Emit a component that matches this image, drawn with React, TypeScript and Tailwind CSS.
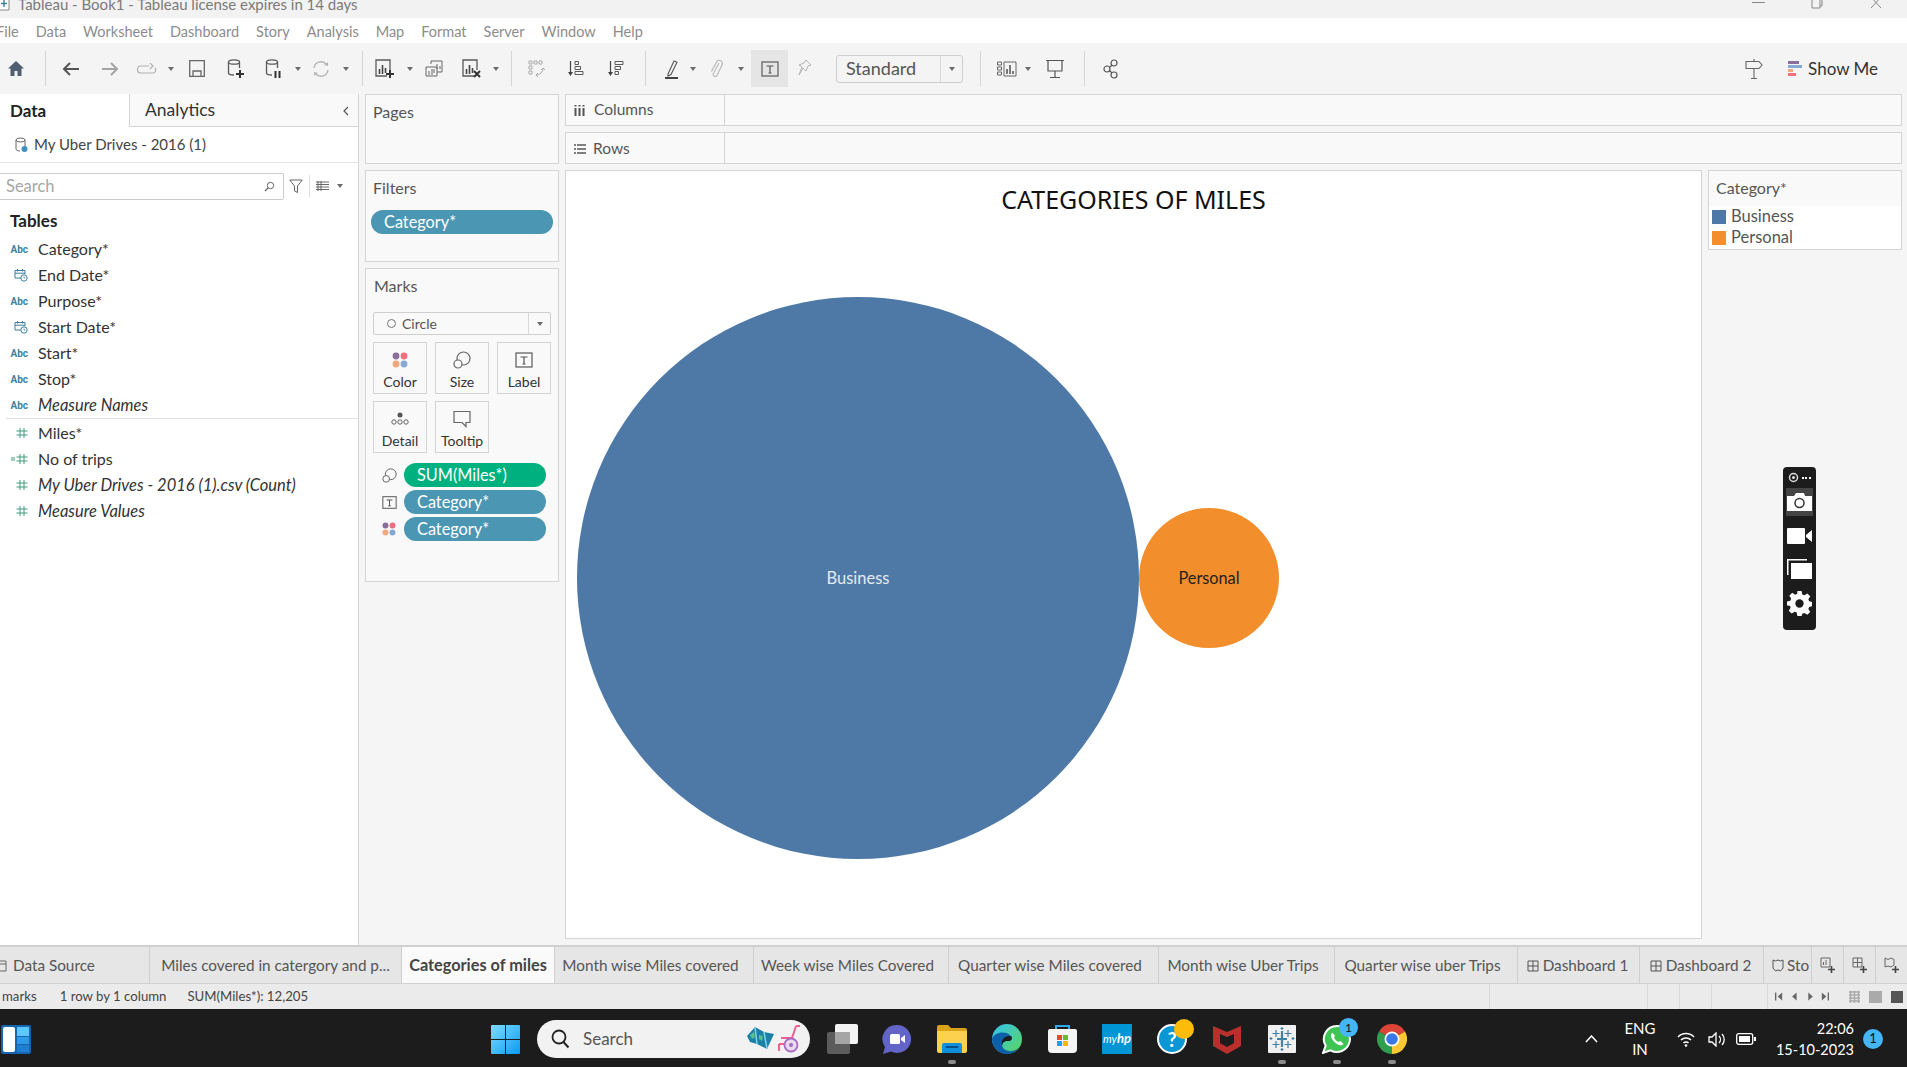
import type { ReactNode } from "react";

const S = { fill: "none", stroke: "#5a5a5a", strokeWidth: 1.3 };

function Caret({ className = "" }: { className?: string }) {
  return (
    <svg width="6" height="4" viewBox="0 0 6 4" className={className}>
      <path d="M0 0h6L3 4z" fill="#6b6b6b" />
    </svg>
  );
}

function Sep({ className = "" }: { className?: string }) {
  return <div className={`w-px h-[35px] bg-[#d6d6d6] ${className}`} />;
}

function HomeIcon({ className = "" }: { className?: string }) {
  return (
    <svg width="18" height="17" viewBox="0 0 18 17" className={className}>
      <path d="M9 1L1 8.5h2.5V16h4v-5h3v5h4V8.5H17z" fill="#4f5f70" />
    </svg>
  );
}

function ArrowIcon({ dir, color, className = "" }: { dir: "l" | "r"; color: string; className?: string }) {
  return (
    <svg width="18" height="14" viewBox="0 0 18 14" className={className}>
      <path
        d={dir === "l" ? "M17 7H2M8 1L2 7l6 6" : "M1 7h15M10 1l6 6-6 6"}
        fill="none"
        stroke={color}
        strokeWidth="2"
      />
    </svg>
  );
}

function Cylinder({ badge, className = "" }: { badge: "plus" | "pause"; className?: string }) {
  return (
    <svg width="18" height="20" viewBox="0 0 18 20" className={className}>
      <ellipse cx="7" cy="3" rx="5.5" ry="2.2" {...S} />
      <path d="M1.5 3v11c0 1.2 2 2 5.5 2M12.5 3v6" {...S} />
      {badge === "plus" ? (
        <path d="M13 11v8M9 15h8" stroke="#333" strokeWidth="2" />
      ) : (
        <path d="M10.5 12v7M14.5 12v7" stroke="#333" strokeWidth="2" />
      )}
    </svg>
  );
}

function SheetIcon({ mark, className = "" }: { mark: "plus" | "x"; className?: string }) {
  return (
    <svg width="20" height="20" viewBox="0 0 20 20" className={className}>
      <path d="M12 17H1V1h14v10" {...S} />
      <path d="M4.5 10v5M7.5 6v9M10.5 9v5" stroke="#444" strokeWidth="1.6" />
      {mark === "plus" ? (
        <path d="M15 11v8M11 15h8" stroke="#333" strokeWidth="2" />
      ) : (
        <path d="M12 12l6 6M18 12l-6 6" stroke="#333" strokeWidth="2" />
      )}
    </svg>
  );
}

function SortIcon({ desc, className = "" }: { desc?: boolean; className?: string }) {
  return (
    <svg width="16" height="17" viewBox="0 0 16 17" className={className}>
      <path d="M2.5 1v13" stroke="#444" strokeWidth="1.2" />
      <path d="M0 12h5l-2.5 4z" fill="#444" />
      {desc ? (
        <path d="M7 1.5h8v3H7zM7 6.5h5.5v3H7zM7 11.5h3.5v3H7z" {...S} strokeWidth="1" />
      ) : (
        <path d="M7 1.5h3.5v3H7zM7 6.5h5.5v3H7zM7 11.5h8v3H7z" {...S} strokeWidth="1" />
      )}
    </svg>
  );
}

function LabelBox({ size = 18, className = "" }: { size?: number; className?: string }) {
  return (
    <svg width={size} height={size} viewBox="0 0 18 18" className={className}>
      <rect x="1" y="2" width="16" height="14" fill="none" stroke="#666" strokeWidth="1.3" />
      <path d="M5.5 6h7M9 6v7M7.5 13h3" stroke="#555" strokeWidth="1.2" fill="none" />
    </svg>
  );
}

function SizeIcon({ size = 18, className = "" }: { size?: number; className?: string }) {
  return (
    <svg width={size} height={size} viewBox="0 0 18 18" className={className}>
      <circle cx="10.5" cy="7.5" r="6.5" fill="none" stroke="#666" strokeWidth="1.2" />
      <circle cx="5" cy="13" r="4" fill="#fafafa" stroke="#666" strokeWidth="1.2" />
    </svg>
  );
}

function ColorDots({ size = 16, className = "" }: { size?: number; className?: string }) {
  return (
    <svg width={size} height={size} viewBox="0 0 16 16" className={className}>
      <circle cx="4" cy="4" r="3.4" fill="#8a6d9b" />
      <circle cx="12" cy="4" r="3.4" fill="#f26d7d" />
      <circle cx="4" cy="12" r="3.4" fill="#f3a77e" />
      <circle cx="12" cy="12" r="3.4" fill="#86a9d4" />
    </svg>
  );
}

function DateIcon() {
  return (
    <svg width="14" height="14" viewBox="0 0 14 14">
      <path d="M8 10H1V2.5h10V6M1 5.2h10M3.5 1v2.5M8.5 1v2.5" fill="none" stroke="#3f7f9c" strokeWidth="1" />
      <circle cx="10" cy="10" r="3.2" fill="#fff" stroke="#3f7f9c" strokeWidth="1" />
      <path d="M10 8.5V10h1.4" fill="none" stroke="#3f7f9c" strokeWidth="0.8" />
    </svg>
  );
}

function HashIcon({ calc }: { calc?: boolean }) {
  return (
    <svg width="18" height="12" viewBox="0 0 18 12">
      <path d="M10 1v10M14 1v10M6.5 4h11M6.5 8h11" stroke="#3e9d7e" strokeWidth="1" fill="none" />
      {calc && <path d="M1 5h4M1 7h4" stroke="#3e9d7e" strokeWidth="1" />}
    </svg>
  );
}

type Field = { name: string; kind: "abc" | "date" | "num" | "calc"; italic?: boolean };

const dims: Field[] = [
  { name: "Category*", kind: "abc" },
  { name: "End Date*", kind: "date" },
  { name: "Purpose*", kind: "abc" },
  { name: "Start Date*", kind: "date" },
  { name: "Start*", kind: "abc" },
  { name: "Stop*", kind: "abc" },
  { name: "Measure Names", kind: "abc", italic: true },
];

const measures: Field[] = [
  { name: "Miles*", kind: "num" },
  { name: "No of trips", kind: "calc" },
  { name: "My Uber Drives - 2016 (1).csv (Count)", kind: "num", italic: true },
  { name: "Measure Values", kind: "num", italic: true },
];

function FieldRow({ f }: { f: Field }) {
  return (
    <div className="flex items-center h-[26px]">
      <div className="w-[38px] flex justify-end pr-[10px]">
        {f.kind === "abc" && <span className="text-[10px] font-bold text-[#3f7f9c] font-['Roboto',sans-serif]">Abc</span>}
        {f.kind === "date" && <DateIcon />}
        {f.kind === "num" && <HashIcon />}
        {f.kind === "calc" && <HashIcon calc />}
      </div>
      <span className={f.italic ? "text-[16.5px] italic text-[#333]" : "text-[16px] text-[#333]"}>{f.name}</span>
    </div>
  );
}

function MarkButton({ label, icon }: { label: string; icon: ReactNode }) {
  return (
    <div className="h-[52px] border border-[#d4d4d4] flex flex-col items-center pt-[7px]">
      <div className="h-[20px] flex items-center">{icon}</div>
      <span className="text-[14px] leading-[18px] mt-[3px] text-[#333]">{label}</span>
    </div>
  );
}

function Pill({ children, className }: { children: ReactNode; className: string }) {
  return (
    <div className={`h-[24px] rounded-full flex items-center text-[16.3px] text-white ${className}`}>{children}</div>
  );
}

const tabs = [
  { label: "Miles covered in catergory and p...", cls: "w-[252px] justify-center" },
  { label: "Categories of miles", cls: "w-[153px] justify-center font-bold text-[16.3px] bg-[#fafafa] text-[#444]" },
  { label: "Month wise Miles covered", cls: "w-[199px] justify-center pr-[7px]" },
  { label: "Week wise Miles Covered", cls: "w-[195px] justify-center pr-[7px]" },
  { label: "Quarter wise Miles covered", cls: "w-[210px] justify-center pr-[7px]" },
  { label: "Month wise Uber Trips", cls: "w-[176px] justify-center pr-[7px]" },
  { label: "Quarter wise uber Trips", cls: "w-[183px] justify-center pr-[7px]" },
];

function TabGrid() {
  return (
    <svg width="12" height="12" viewBox="0 0 12 12" className="mr-[4px] shrink-0">
      <path d="M1 1h10v10H1zM6 1v10M1 6h10" fill="none" stroke="#555" strokeWidth="1" />
    </svg>
  );
}

function NewTabIcon({ kind }: { kind: "sheet" | "dash" | "story" }) {
  return (
    <svg width="16" height="17" viewBox="0 0 16 17">
      {kind === "sheet" && <path d="M1 1h9v9H1zM3.5 8V5M6 8V3" fill="none" stroke="#666" strokeWidth="1" />}
      {kind === "dash" && <path d="M1 1h9v9H1zM5.5 1v9M1 5.5h9" fill="none" stroke="#666" strokeWidth="1" />}
      {kind === "story" && <path d="M1 1l3 1.5L7 1l3 1.5V8l-3 2-3-1-3 1z" fill="none" stroke="#666" strokeWidth="1" />}
      <path d="M11.5 9v7M8 12.5h7" stroke="#444" strokeWidth="1.6" />
    </svg>
  );
}

function Running({ children, dot }: { children: ReactNode; dot?: boolean }) {
  return (
    <div className="relative w-[30px] h-[30px] flex items-center justify-center">
      {children}
      {dot && <div className="absolute left-[11px] top-[36px] w-[8px] h-[4px] rounded-full bg-[#8b8b8b]" />}
    </div>
  );
}

export default function App() {
  return (
    <div className="relative w-[1907px] h-[1067px] overflow-hidden flex flex-col bg-[#f5f5f5] font-['Lato',sans-serif] text-[#333]">
      {/* Title bar */}
      <div className="h-[18px] shrink-0 bg-[#f2f2f2] flex items-start overflow-hidden text-[#7a7a7a]">
        <svg width="12" height="14" viewBox="0 0 12 14" className="ml-[-2px] mt-[-3px]">
          <path d="M1 1h10v12H1z" fill="#fff" stroke="#888" />
          <path d="M6 3v7M3 6.5h6" stroke="#3f7f9c" strokeWidth="1.4" />
        </svg>
        <span className="ml-[8px] mt-[-6px] text-[15px] leading-[20px]">
          Tableau - Book1 - Tableau license expires in 14 days
        </span>
        <div className="ml-auto flex items-start text-[#777]">
          <div className="w-[13px] h-px bg-[#888] mt-[2px]" />
          <svg width="12" height="9" viewBox="0 0 12 9" className="ml-[46px]">
            <path d="M1 0v8h8V0M3 0V-2h8v8H9" fill="none" stroke="#888" />
          </svg>
          <svg width="12" height="9" viewBox="0 0 12 9" className="ml-[47px] mr-[25px]">
            <path d="M1 -3l10 11M11 -3L1 8" fill="none" stroke="#888" />
          </svg>
        </div>
      </div>

      {/* Menu */}
      <div className="h-[25px] shrink-0 bg-white flex items-center gap-[17px] pt-[2px] text-[14.5px] text-[#8c8c8c] overflow-hidden">
        <span className="ml-[-4px]">File</span>
        <span>Data</span>
        <span>Worksheet</span>
        <span>Dashboard</span>
        <span>Story</span>
        <span>Analysis</span>
        <span>Map</span>
        <span>Format</span>
        <span>Server</span>
        <span>Window</span>
        <span>Help</span>
      </div>

      {/* Toolbar */}
      <div className="h-[51px] shrink-0 flex items-center pl-[7px] pr-[29px] bg-[#f4f4f4]">
        <HomeIcon />
        <Sep className="ml-[20px]" />
        <ArrowIcon dir="l" color="#555" className="ml-[16px]" />
        <ArrowIcon dir="r" color="#a3a3a3" className="ml-[21px]" />
        <svg width="20" height="12" viewBox="0 0 20 12" className="ml-[18px]">
          <path d="M12 3H4a3 3 0 0 0 0 7h12a3 3 0 0 0 2-5M13 0l3 3-3 3" fill="none" stroke="#b0b0b0" strokeWidth="1.2" />
        </svg>
        <Caret className="ml-[11px]" />
        <svg width="16" height="17" viewBox="0 0 16 17" className="ml-[15px]">
          <path d="M.7.7h14.6v15.6H.7zM4 16v-5h8v5" fill="none" stroke="#666" strokeWidth="1.3" />
        </svg>
        <Cylinder badge="plus" className="ml-[22px]" />
        <Cylinder badge="pause" className="ml-[20px]" />
        <Caret className="ml-[12px]" />
        <svg width="18" height="18" viewBox="0 0 18 18" className="ml-[11px]">
          <path d="M2 8a7 7 0 0 1 12-4M16 10a7 7 0 0 1-12 4" fill="none" stroke="#b5b5b5" strokeWidth="1.4" />
          <path d="M12 5l4 1V2zM6 13l-4-1v4z" fill="#b5b5b5" />
        </svg>
        <Caret className="ml-[13px]" />
        <Sep className="ml-[13px]" />
        <SheetIcon mark="plus" className="ml-[12px]" />
        <Caret className="ml-[12px]" />
        <svg width="18" height="18" viewBox="0 0 18 18" className="ml-[12px]">
          <path d="M6 4V1h11v11h-5M1 7h11v9H1z" fill="#f4f4f4" stroke="#666" strokeWidth="1" />
          <path d="M9 9v4M12 4v5M15 6v3M4 11v4M7 9v6" stroke="#666" strokeWidth="1" />
        </svg>
        <SheetIcon mark="x" className="ml-[19px]" />
        <Caret className="ml-[11px]" />
        <Sep className="ml-[12px]" />
        <svg width="18" height="18" viewBox="0 0 18 18" className="ml-[16px]">
          <path d="M1 1h3v3H1zM6 1h3v3H6zM11 1h3v3h-3zM1 6h3v3H1zM1 11h3v3H1z" fill="none" stroke="#aaa" />
          <path d="M15 8c0 4-3 7-7 7m0 0l2-2m-2 2l2 2m5-9l-2 2m2-2l2 2" fill="none" stroke="#aaa" />
        </svg>
        <SortIcon className="ml-[22px]" />
        <SortIcon desc className="ml-[24px]" />
        <Sep className="ml-[21px]" />
        <svg width="16" height="20" viewBox="0 0 16 20" className="ml-[18px]">
          <path d="M4 15L10 2l3 1.3L7 15.5l-3 1.5z" fill="none" stroke="#555" strokeWidth="1.1" />
          <path d="M1 19h13" stroke="#444" strokeWidth="2" />
        </svg>
        <Caret className="ml-[10px]" />
        <svg width="14" height="20" viewBox="0 0 14 20" className="ml-[14px]">
          <path d="M9 4L3.500 14.500a2 2 0 0 0 3.500 2L12 6a3 3 0 0 0-5.500-3L1.500 12.500" fill="none" stroke="#b5b5b5" strokeWidth="1.1" />
        </svg>
        <Caret className="ml-[14px]" />
        <div className="ml-[7px] w-[37px] h-[37px] bg-[#e5e5e5] flex items-center justify-center">
          <LabelBox />
        </div>
        <svg width="14" height="20" viewBox="0 0 14 20" className="ml-[10px]">
          <path d="M8 1l5 5-3 1-2 5-3-3-4 7 3-8-3-2 5-2z" fill="none" stroke="#b5b5b5" strokeWidth="1" />
        </svg>
        <div className="ml-[24px] w-[127px] h-[28px] border border-[#cfcfcf] rounded-[3px] flex items-center text-[18px] text-[#555]">
          <span className="flex-1 pl-[9px]">Standard</span>
          <div className="w-[22px] h-full border-l border-[#d8d8d8] flex items-center justify-center">
            <Caret />
          </div>
        </div>
        <Sep className="ml-[17px]" />
        <svg width="20" height="16" viewBox="0 0 20 16" className="ml-[16px]">
          <path d="M.5 1h4v3h-4zM.5 6h4v3h-4zM.5 11h4v3h-4zM7 1h12v14H7z" fill="none" stroke="#666" />
          <path d="M10 13V8M13 13V4M16 13v-3" stroke="#444" strokeWidth="1.4" />
        </svg>
        <Caret className="ml-[8px]" />
        <svg width="18" height="20" viewBox="0 0 18 20" className="ml-[15px]">
          <path d="M0 1.500h18M2 2v10h14V2M9 12v6M4 18.500h10" fill="none" stroke="#555" strokeWidth="1.2" />
        </svg>
        <Sep className="ml-[20px]" />
        <svg width="16" height="20" viewBox="0 0 16 20" className="ml-[18px]">
          <g fill="none" stroke="#555" strokeWidth="1.2">
            <circle cx="11" cy="4" r="3" />
            <circle cx="4" cy="10" r="3" />
            <circle cx="11" cy="16" r="3" />
            <path d="M6.500 8.500L9 6M6.500 11.500L9 14" />
          </g>
        </svg>
        <svg width="18" height="20" viewBox="0 0 18 20" className="ml-auto">
          <path d="M9 0v2M1 2.500h13l3 3.500-3 3.500H1zM9 10v9M6 19.500h6" fill="none" stroke="#666" strokeWidth="1.1" />
        </svg>
        <svg width="14" height="15" viewBox="0 0 14 15" className="ml-[25px]">
          <rect y="0" width="11" height="3" fill="#8a6d9b" />
          <rect y="4" width="14" height="3" fill="#86a9d4" />
          <rect y="8" width="5" height="3" fill="#f3a77e" />
          <rect y="12" width="8" height="3" fill="#f26d7d" />
        </svg>
        <span className="ml-[6px] text-[17px] text-[#333]">Show Me</span>
      </div>

      {/* Main */}
      <div className="h-[851px] shrink-0 flex">
        {/* Data pane */}
        <div className="w-[359px] shrink-0 bg-white border-r border-[#d4d4d4] flex flex-col">
          <div className="h-[33px] flex">
            <div className="w-[129px] pl-[10px] flex items-center text-[17px] font-bold text-[#222]">Data</div>
            <div className="flex-1 flex items-center pl-[15px] pr-[9px] pt-[1px] border-l border-b border-[#d4d4d4] bg-[#f9f9f9] text-[17.500px] text-[#333]">
              <span className="flex-1">Analytics</span>
              <svg width="6" height="10" viewBox="0 0 6 10">
                <path d="M5 1L1 5l4 4" fill="none" stroke="#555" strokeWidth="1.2" />
              </svg>
            </div>
          </div>
          <div className="h-[36px] flex items-center pl-[15px] border-b border-[#e3e3e3]">
            <svg width="13" height="16" viewBox="0 0 13 16">
              <ellipse cx="5.500" cy="3" rx="4.500" ry="2" fill="none" stroke="#666" />
              <path d="M1 3v9c0 1 1.500 2 4 2M10 3v6" fill="none" stroke="#666" />
              <circle cx="9.500" cy="12" r="3" fill="#3f8fc0" />
            </svg>
            <span className="ml-[6px] text-[15px] text-[#444]">My Uber Drives - 2016 (1)</span>
          </div>
          <div className="flex items-center h-[28px] mt-[9px]">
            <div className="w-[284px] h-[27px] border border-l-0 border-[#cccccc] rounded-r-[2px] flex items-center pl-[6px] pr-[8px]">
              <span className="flex-1 text-[16.500px] text-[#a6a6a6]">Search</span>
              <svg width="11" height="11" viewBox="0 0 11 11">
                <circle cx="6.500" cy="4.500" r="3.200" fill="none" stroke="#666" />
                <path d="M4 7L1 10" stroke="#666" strokeWidth="1.3" />
              </svg>
            </div>
            <svg width="14" height="14" viewBox="0 0 14 14" className="ml-[5px]">
              <path d="M.7 1h12.600L8.500 7v6.500L5.500 12V7z" fill="none" stroke="#666" />
            </svg>
            <div className="ml-[6px] w-px h-[22px] bg-[#e0e0e0]" />
            <svg width="13" height="10" viewBox="0 0 13 10" className="ml-[6px]">
              <path d="M0 1h13M0 3.500h13M0 6h13M0 8.500h13M2 0v10M5 0v10" stroke="#666" strokeWidth="1" />
            </svg>
            <Caret className="ml-[8px]" />
          </div>
          <div className="ml-[10px] mt-[8px] h-[26px] flex items-center text-[17px] font-bold text-[#222]">Tables</div>
          <div className="mt-[2px] flex flex-col">
            {dims.map((f) => (
              <FieldRow key={f.name} f={f} />
            ))}
          </div>
          <div className="h-px ml-[6px] bg-[#e0e0e0] mb-[1px]" />
          <div className="flex flex-col">
            {measures.map((f) => (
              <FieldRow key={f.name} f={f} />
            ))}
          </div>
        </div>

        {/* Cards */}
        <div className="w-[194px] shrink-0 ml-[6px] flex flex-col gap-[6px]">
          <div className="h-[70px] border border-[#d4d4d4] bg-[#f9f9f9] pl-[7px] pt-[5px] text-[16px] text-[#555]">Pages</div>
          <div className="h-[92px] border border-[#d4d4d4] bg-[#f9f9f9] px-[5px] pt-[5px] text-[16px] text-[#555]">
            <div className="pl-[2px]">Filters</div>
            <Pill className="mt-[10px] pl-[13px] bg-[#4a96b3]">Category*</Pill>
          </div>
          <div className="h-[314px] border border-[#d4d4d4] bg-[#f9f9f9] px-[7px] pt-[5px] text-[16px] text-[#555]">
            <div className="pl-[1px]">Marks</div>
            <div className="mt-[14px] h-[23px] border border-[#cfcfcf] rounded-[2px] flex items-center text-[14px] text-[#555]">
              <span className="ml-[13px] w-[9px] h-[9px] rounded-full border border-[#777]" />
              <span className="ml-[6px] flex-1">Circle</span>
              <div className="w-[22px] h-full border-l border-[#d8d8d8] flex items-center justify-center">
                <Caret />
              </div>
            </div>
            <div className="mt-[7px] grid grid-cols-3 gap-x-[8px] gap-y-[7px]">
              <MarkButton label="Color" icon={<ColorDots />} />
              <MarkButton label="Size" icon={<SizeIcon />} />
              <MarkButton label="Label" icon={<LabelBox />} />
              <MarkButton
                label="Detail"
                icon={
                  <svg width="18" height="14" viewBox="0 0 18 14">
                    <circle cx="9" cy="3" r="2.500" fill="#555" />
                    <g fill="none" stroke="#666">
                      <circle cx="3" cy="10" r="2.200" />
                      <circle cx="9" cy="10" r="2.200" />
                      <circle cx="15" cy="10" r="2.200" />
                    </g>
                  </svg>
                }
              />
              <MarkButton
                label="Tooltip"
                icon={
                  <svg width="18" height="18" viewBox="0 0 18 18">
                    <path d="M1 1.500h16v11h-4v4l-4-4H1z" fill="none" stroke="#666" strokeWidth="1.200" />
                  </svg>
                }
              />
            </div>
            <div className="mt-[10px] flex flex-col gap-[3px]">
              <div className="flex items-center">
                <div className="w-[31px] pl-[9px]"><SizeIcon size={15} /></div>
                <Pill className="w-[142px] pl-[13px] bg-[#00b180]">SUM(Miles*)</Pill>
              </div>
              <div className="flex items-center">
                <div className="w-[31px] pl-[9px]"><LabelBox size={15} /></div>
                <Pill className="w-[142px] pl-[13px] bg-[#4a96b3]">Category*</Pill>
              </div>
              <div className="flex items-center">
                <div className="w-[31px] pl-[9px]"><ColorDots size={14} /></div>
                <Pill className="w-[142px] pl-[13px] bg-[#4a96b3]">Category*</Pill>
              </div>
            </div>
          </div>
        </div>

        {/* Shelves and view */}
        <div className="flex-1 ml-[6px] mr-[5px] pb-[6px] flex flex-col gap-[6px]">
          <div className="h-[32px] shrink-0 border border-[#d4d4d4] bg-[#f9f9f9] flex text-[15.500px] text-[#555]">
            <div className="w-[159px] border-r border-[#d4d4d4] flex items-center pl-[8px]">
              <svg width="11" height="11" viewBox="0 0 11 11">
                <path d="M1.500 3v8M5.500 3v8M9.500 3v8M1.500 0v1.500M5.500 0v1.500M9.500 0v1.500" stroke="#555" strokeWidth="2" />
              </svg>
              <span className="ml-[9px]">Columns</span>
            </div>
          </div>
          <div className="h-[32px] shrink-0 border border-[#d4d4d4] bg-[#f9f9f9] flex text-[15.500px] text-[#555]">
            <div className="w-[159px] border-r border-[#d4d4d4] flex items-center pl-[8px] pt-[1px]">
              <svg width="12" height="10" viewBox="0 0 12 10">
                <path d="M0 1h2M3 1h9M0 5h2M3 5h9M0 9h2M3 9h9" stroke="#555" strokeWidth="1.400" />
              </svg>
              <span className="ml-[7px]">Rows</span>
            </div>
          </div>
          <div className="flex-1 flex gap-[6px] min-h-0">
            <div className="w-[1137px] border border-[#d4d4d4] bg-white flex flex-col">
              <div className="h-[46px] pt-[10px] text-center text-[25px] leading-[36px] text-[#111] font-['Noto_Sans',sans-serif]">
                CATEGORIES OF MILES
              </div>
              <div className="flex-1 flex items-center pl-[11px]">
                <div className="w-[562px] h-[562px] rounded-full bg-[#4e79a7] flex items-center justify-center pt-[2px] text-[16.500px] text-[#e3ebf3]">
                  Business
                </div>
                <div className="w-[140px] h-[140px] rounded-full bg-[#f28e2b] flex items-center justify-center pt-[2px] text-[16.300px] text-[#222]">
                  Personal
                </div>
              </div>
            </div>
            <div className="w-[194px] h-[80px] border border-[#d4d4d4] bg-white">
              <div className="h-[35px] bg-[#f9f9f9] flex items-center pl-[7px] pb-[2px] text-[16px] text-[#555]">Category*</div>
              <div className="flex items-center h-[21px] pl-[3px] text-[16.500px] text-[#555]">
                <div className="w-[14px] h-[14px] bg-[#4e79a7] mr-[5px]" />
                Business
              </div>
              <div className="flex items-center h-[21px] pl-[3px] text-[16.500px] text-[#555]">
                <div className="w-[14px] h-[14px] bg-[#f28e2b] mr-[5px]" />
                Personal
              </div>
            </div>
          </div>
        </div>
      </div>

      {/* Sheet tabs */}
      <div className="h-[39px] shrink-0 flex border-t-2 border-b border-[#d0d0d0] bg-[#e6e6e6] text-[15.300px] text-[#555] overflow-hidden">
        <div className="w-[150px] h-full flex items-center pt-[1px] border-r border-[#cfcfcf] shrink-0 whitespace-nowrap">
          <svg width="7" height="12" viewBox="0 0 7 12" className="mr-[6px]">
            <path d="M-1 1h7v10h-7M-1 4h7" fill="none" stroke="#666" />
          </svg>
          Data Source
        </div>
        {tabs.map((t) => (
          <div key={t.label} className={`h-full flex items-center pt-[1px] border-r border-[#cfcfcf] shrink-0 whitespace-nowrap ${t.cls}`}>
            {t.label}
          </div>
        ))}
        <div className="w-[122px] h-full flex items-center justify-center pt-[1px] pr-[2px] border-r border-[#cfcfcf] shrink-0">
          <TabGrid />
          Dashboard 1
        </div>
        <div className="w-[124px] h-full flex items-center justify-center pt-[1px] pr-[2px] border-r border-[#cfcfcf] shrink-0">
          <TabGrid />
          Dashboard 2
        </div>
        <div className="w-[48px] h-full flex items-center pl-[8px] pt-[1px] border-r border-[#cfcfcf] shrink-0 overflow-hidden">
          <svg width="12" height="13" viewBox="0 0 12 13" className="mr-[3px] shrink-0">
            <path d="M1 1l2.500 1L6 1l2.500 1L11 1v8l-2.500 3-2.500-1-2.500 1L1 9z" fill="none" stroke="#555" />
          </svg>
          Sto
        </div>
        <div className="w-[32px] h-full flex items-center justify-center border-r border-[#cfcfcf] shrink-0"><NewTabIcon kind="sheet" /></div>
        <div className="w-[32px] h-full flex items-center justify-center border-r border-[#cfcfcf] shrink-0"><NewTabIcon kind="dash" /></div>
        <div className="w-[31px] h-full flex items-center justify-center shrink-0"><NewTabIcon kind="story" /></div>
      </div>

      {/* Status bar */}
      <div className="h-[25px] shrink-0 flex items-center bg-[#ebebeb] text-[13.200px] text-[#444]">
        <span className="ml-[2px]">marks</span>
        <span className="ml-[23px]">1 row by 1 column</span>
        <span className="ml-[21px]">SUM(Miles*): 12,205</span>
        <div className="ml-auto flex h-full items-center">
          <div className="w-[158px] h-full border-l border-[#d8d8d8]" />
          <div className="w-[32px] h-full border-l border-[#d8d8d8]" />
          <div className="w-[32px] h-full border-l border-[#d8d8d8]" />
          <div className="w-[56px] h-full border-l border-[#d8d8d8]" />
          <div className="w-[140px] h-full border-l border-[#d8d8d8] flex items-center pl-[7px]">
            <svg width="54" height="9" viewBox="0 0 60 9" fill="#666">
              <path d="M0 0h1.500v9H0zM8 0v9L3 4.500zM24 0v9l-5-4.500zM37 0v9l5-4.500zM52 0v9l5-4.500zM58.500 0H60v9h-1.500z" />
            </svg>
            <svg width="11" height="12" viewBox="0 0 11 12" className="ml-[20px]">
              <path d="M0 1h11M0 4h11M0 7h11M0 10h11M1.500 0v12M5.500 0v12M9.500 0v12" stroke="#aaa" strokeWidth="1.500" />
            </svg>
            <div className="ml-[9px] w-[13px] h-[12px] bg-[#aaa]" />
            <div className="ml-[9px] w-[12px] h-[12px] bg-[#555]" />
          </div>
        </div>
      </div>

      {/* Taskbar */}
      <div className="h-[58px] shrink-0 pt-[2px] bg-[#1c1c1c] flex items-center text-white">
        <div className="ml-[1px] w-[30px] h-[29px] rounded-[2px] bg-[#1565b0] flex p-[2px] gap-[2px]">
          <div className="w-[12px] bg-white rounded-[2px]" />
          <div className="flex-1 flex flex-col gap-px">
            <div className="flex-1 bg-[#5cc8ff]" />
            <div className="h-[7px] bg-[#2b9ae8]" />
            <div className="h-[7px] bg-[#1e7ed0]" />
          </div>
        </div>
        <svg width="29" height="29" viewBox="0 0 29 29" className="ml-[460px]">
          <defs>
            <linearGradient id="win" x1="0" y1="0" x2="1" y2="1">
              <stop offset="0" stopColor="#7fdcff" />
              <stop offset="1" stopColor="#0a9bf2" />
            </linearGradient>
          </defs>
          <path d="M0 1a1 1 0 0 1 1-1h13v14H0zM15 0h13a1 1 0 0 1 1 1v13H15zM0 15h14v14H1a1 1 0 0 1-1-1zM15 15h14v13a1 1 0 0 1-1 1H15z" fill="url(#win)" />
        </svg>
        <div className="ml-[17px] w-[273px] h-[38px] rounded-full bg-[#f2f2f2] flex items-center pl-[14px] pr-[10px]">
          <svg width="19" height="20" viewBox="0 0 19 20">
            <circle cx="8" cy="8" r="6.500" fill="none" stroke="#222" strokeWidth="1.800" />
            <path d="M12.500 13l5 5.500" stroke="#222" strokeWidth="2" />
          </svg>
          <span className="ml-[13px] flex-1 text-[17px] text-[#555]">Search</span>
          <svg width="28" height="26" viewBox="0 0 28 26">
            <path d="M0 10L8 1l9 5 10 2-7 15-10-5-7-2z" fill="#1b7fa8" />
            <path d="M8 1l2 17M17 6l3 17" stroke="#7fd4e8" strokeWidth="1.500" />
            <path d="M3 9l4-3 1 5-3 2zM12 9l4 1-1 5-3-2z" fill="#58c08a" />
          </svg>
          <svg width="26" height="28" viewBox="0 0 26 28" className="ml-[-1px]">
            <path d="M22 1h4M22 1l-4 12H7M16 13l2 6H5" fill="none" stroke="#f0608f" strokeWidth="2" />
            <circle cx="17" cy="20" r="6.500" fill="#e8d8f0" stroke="#a56bbf" strokeWidth="1.800" />
            <circle cx="17" cy="20" r="2" fill="#a56bbf" />
            <path d="M5 19v7" stroke="#f0608f" strokeWidth="2" />
          </svg>
        </div>
        <svg width="31" height="31" viewBox="0 0 31 31" className="ml-[17px]">
          <rect x="0" y="8" width="23" height="22" rx="2" fill="#5c5c5c" />
          <rect x="8" y="0" width="23" height="20" rx="2" fill="#f3f3f3" />
          <rect x="8" y="8" width="15" height="12" fill="#a5a5a5" />
        </svg>
        <div className="ml-[24px] flex items-center gap-[25px]">
          <Running>
            <svg width="30" height="30" viewBox="0 0 30 30">
              <path d="M15 1a14 14 0 1 1-6 26.600L1 30l2-7A14 14 0 0 1 15 1z" fill="#6264c7" />
              <rect x="8" y="10" width="10" height="10" rx="1.500" fill="#fff" />
              <path d="M19 14l4-3v8l-4-3z" fill="#fff" />
            </svg>
          </Running>
          <Running dot>
            <svg width="30" height="28" viewBox="0 0 30 28">
              <path d="M0 2a2 2 0 0 1 2-2h9l3 3h14a2 2 0 0 1 2 2v4H0z" fill="#d9a21b" />
              <path d="M0 6h30v20a2 2 0 0 1-2 2H2a2 2 0 0 1-2-2z" fill="#fcd14e" />
              <path d="M5 28v-8a2 2 0 0 1 2-2h16a2 2 0 0 1 2 2v8z" fill="#0f8fdc" />
              <rect x="9" y="21" width="12" height="2" fill="#0b4f88" />
            </svg>
          </Running>
          <Running>
            <svg width="30" height="30" viewBox="0 0 30 30">
              <defs>
                <linearGradient id="edge" x1="0" y1="0" x2="1" y2="1">
                  <stop offset="0" stopColor="#35c1f1" />
                  <stop offset="1" stopColor="#5ad65a" />
                </linearGradient>
              </defs>
              <circle cx="15" cy="15" r="15" fill="url(#edge)" />
              <path d="M0 15C2 8 14 6 19 12c2 3 0 5-3 5-6-1-8 4-4 8 4 3 10 3 14-1-3 5-8 6-11 6C6 30 0 23 0 15z" fill="#0c5fa8" />
              <path d="M19 12c2 3 0 5-3 5-4 0-6 2-5.500 5C8 17 12 11 19 12z" fill="#1c1c1c" />
            </svg>
          </Running>
          <Running>
            <svg width="29" height="30" viewBox="0 0 29 30">
              <path d="M8 6V2h13v4" fill="none" stroke="#31a9f0" strokeWidth="2" />
              <path d="M0 7a2 2 0 0 1 2-2h25a2 2 0 0 1 2 2v18a4 4 0 0 1-4 4H4a4 4 0 0 1-4-4z" fill="#f5f5f5" />
              <rect x="9" y="11" width="5" height="5" fill="#e8491d" />
              <rect x="15" y="11" width="5" height="5" fill="#6cba2c" />
              <rect x="9" y="17" width="5" height="5" fill="#1da1f2" />
              <rect x="15" y="17" width="5" height="5" fill="#fbb800" />
            </svg>
          </Running>
          <Running>
            <div className="w-[30px] h-[30px] bg-[#0096d6] flex items-center justify-center text-[11px] italic text-white whitespace-nowrap">
              my<span className="font-bold text-[13px]">hp</span>
            </div>
          </Running>
          <Running>
            <div className="relative w-[30px] h-[30px] rounded-full bg-[#0b96d6] border-2 border-white flex items-center justify-center text-[20px] font-bold text-white">
              ?
              <div className="absolute left-[15px] top-[-7px] w-[20px] h-[20px] rounded-full bg-[#fdbb0a]" />
            </div>
          </Running>
          <Running>
            <svg width="28" height="30" viewBox="0 0 28 30">
              <path d="M0 2l14 6 14-6v20l-14 8-14-8z" fill="#b92f2c" />
              <path d="M7 10l7 3 7-3v9l-7 4-7-4z" fill="#1c1c1c" />
            </svg>
          </Running>
          <Running dot>
            <svg width="28" height="28" viewBox="0 0 28 28">
              <rect width="28" height="28" rx="1" fill="#f0f0f0" />
              <g stroke="#3f7fa8" strokeWidth="1.800">
                <path d="M14 6v16M9 14h10" strokeWidth="2.200" />
                <path d="M8 5v7M4.500 8.500h7M20 5v7M16.500 8.500h7M8 16v7M4.500 19.500h7M20 16v7M16.500 19.500h7M14 2v3M12.500 3.500h3M14 23v3M12.500 24.500h3M3 12v3M1.500 13.500h3M25 12v3M23.500 13.500h3" strokeWidth="1.200" />
              </g>
            </svg>
          </Running>
          <Running dot>
            <div className="relative">
              <svg width="30" height="30" viewBox="0 0 30 30">
                <path d="M15 2a13 13 0 1 1-6.500 24.300L1 29l2.700-7.300A13 13 0 0 1 15 2z" fill="#3ec453" stroke="#fff" strokeWidth="2" />
                <path d="M10 9c-2 2-1 6 3 9.500s7 3.500 8.500 1.500l-3-3-2 1c-2-1-3.500-2.500-4.500-4.500l1-2-3-3z" fill="#fff" />
              </svg>
              <div className="absolute left-[17px] top-[-6px] w-[19px] h-[19px] rounded-full bg-[#45b5f5] flex items-center justify-center text-[12px] text-[#111]">1</div>
            </div>
          </Running>
          <Running dot>
            <svg width="30" height="30" viewBox="0 0 30 30">
              <path d="M15 15L2 7.500A15 15 0 0 1 28 7.500z" fill="#db4437" />
              <path d="M15 15L2 7.500A15 15 0 0 0 15 30z" fill="#2f9e4f" />
              <path d="M15 15L28 7.500A15 15 0 0 1 15 30z" fill="#fcc934" />
              <circle cx="15" cy="15" r="7.500" fill="#fff" />
              <circle cx="15" cy="15" r="5.800" fill="#3b78e7" />
            </svg>
          </Running>
        </div>
        <svg width="13" height="8" viewBox="0 0 13 8" className="ml-[178px]">
          <path d="M1 7l5.500-6L12 7" fill="none" stroke="#fff" strokeWidth="1.500" />
        </svg>
        <div className="ml-[25px] w-[34px] text-center text-[15px] leading-[21px]">
          <div>ENG</div>
          <div>IN</div>
        </div>
        <svg width="18" height="15" viewBox="0 0 18 15" className="ml-[20px]">
          <g fill="none" stroke="#fff" strokeWidth="1.500">
            <path d="M1 5a11 11 0 0 1 16 0M4 8a7 7 0 0 1 10 0M6.500 11a3.500 3.500 0 0 1 5 0" />
          </g>
          <circle cx="9" cy="13.500" r="1.300" fill="#fff" />
        </svg>
        <svg width="18" height="15" viewBox="0 0 18 15" className="ml-[13px]">
          <path d="M1 5h3l4-4v13l-4-4H1z" fill="none" stroke="#fff" strokeWidth="1.300" />
          <path d="M11 4a5 5 0 0 1 0 7M14 2a8 8 0 0 1 0 11" fill="none" stroke="#fff" strokeWidth="1.300" />
        </svg>
        <svg width="20" height="12" viewBox="0 0 20 12" className="ml-[10px]">
          <rect x=".7" y=".7" width="16" height="10.600" rx="2" fill="none" stroke="#fff" strokeWidth="1.300" />
          <rect x="3" y="3" width="11" height="6" fill="#fff" />
          <rect x="18" y="4" width="2" height="4" fill="#fff" />
        </svg>
        <div className="ml-[19px] w-[79px] text-right text-[14.5px] leading-[21px]">
          <div>22:06</div>
          <div>15-10-2023</div>
        </div>
        <div className="ml-[9px] w-[20px] h-[20px] rounded-full bg-[#45b5f5] flex items-center justify-center text-[13px] text-[#111]">1</div>
      </div>

      {/* Floating capture tool */}
      <div className="absolute left-[1783px] top-[467px] w-[33px] h-[163px] rounded-[4px] bg-[#1c1c1c] flex flex-col items-center">
        <div className="h-[21px] w-full flex items-center justify-center gap-[3px]">
          <svg width="11" height="11" viewBox="0 0 11 11">
            <circle cx="5.500" cy="5.500" r="4" fill="none" stroke="#ddd" strokeWidth="1.500" />
            <circle cx="5.500" cy="5.500" r="1.500" fill="#ddd" />
          </svg>
          <span className="w-[9px] h-[2px] border-t-2 border-dotted border-white" />
        </div>
        <div className="w-[27px] h-[28px] bg-[#444] flex items-center justify-center">
          <svg width="25" height="20" viewBox="0 0 25 20">
            <path d="M0 4h7l2-3h8l1 3h7v15H0z" fill="#fff" />
            <circle cx="12.500" cy="11" r="4.500" fill="#fff" stroke="#333" strokeWidth="1.500" />
          </svg>
        </div>
        <svg width="25" height="16" viewBox="0 0 25 16" className="mt-[12px]">
          <rect width="18" height="16" rx="1" fill="#fff" />
          <path d="M19 7l6-5v12l-6-5z" fill="#fff" />
        </svg>
        <svg width="25" height="20" viewBox="0 0 25 20" className="mt-[15px]">
          <path d="M0 0h20v1.500H1.500V16H0z" fill="#fff" />
          <rect x="4" y="4" width="21" height="16" fill="#fff" />
        </svg>
        <svg width="25" height="25" viewBox="0 0 24 24" className="mt-[12px]">
          <path
            fill="#fff"
            fillRule="evenodd"
            d="M10 0h4l.7 3.300 2 .8L19.500 2.300l2.800 2.800-1.800 2.800.8 2 3.200.700v4l-3.200.7-.8 2 1.800 2.800-2.800 2.800-2.800-1.800-2 .8L14 24h-4l-.7-3.300-2-.8-2.800 1.800-2.800-2.800 1.800-2.800-.8-2L0 14v-4l3.200-.7.800-2L2.200 4.500 5 1.700l2.800 1.800 2-.8zM12 8a4 4 0 1 0 0 8 4 4 0 0 0 0-8z"
          />
        </svg>
      </div>
    </div>
  );
}
